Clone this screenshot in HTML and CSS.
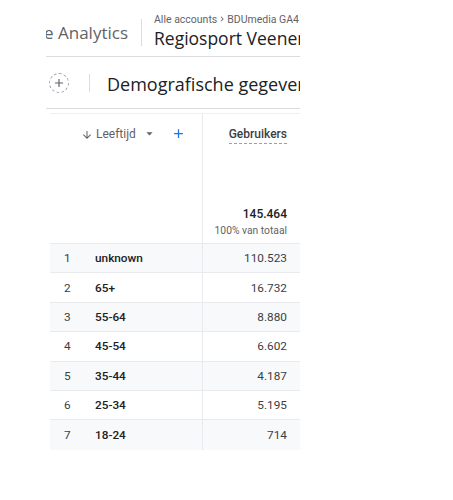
FILE: index.html
```html
<!DOCTYPE html>
<html lang="nl">
<head>
<meta charset="utf-8">
<link rel="stylesheet" href="styles.css">
</head>
<body>
<div class="page">
  <div class="topbar">
    <div class="logo"><span>Google Analytics</span></div>
    <div class="vdiv tall"></div>
    <div class="titles">
      <div class="crumbs">Alle accounts <svg class="chev" viewBox="0 0 24 24" width="10" height="10"><path d="M8.6 16.6L13.2 12 8.6 7.4 10 6l6 6-6 6z" fill="#5f6368"/></svg> BDUmedia GA4</div>
      <div class="property">Regiosport Veenendaal</div>
    </div>
  </div>
  <div class="bar2">
    <div class="addbtn"><svg viewBox="0 0 24 24" width="14" height="14"><path d="M19 13h-6v6h-2v-6H5v-2h6V5h2v6h6v2z" fill="#5f6368"/></svg></div>
    <div class="vdiv short"></div>
    <div class="pagetitle">Demografische gegevens: overzicht</div>
  </div>
  <div class="table">
    <div class="thead">
      <div class="hcell dim">
        <svg class="arrow" viewBox="0 0 24 24" width="12" height="12"><path d="M20 12l-1.41-1.41L13 16.17V4h-2v12.17l-5.58-5.59L4 12l8 8 8-8z" fill="#5f6368"/></svg>
        <span class="dimname">Leeftijd</span>
        <svg class="caret" viewBox="0 0 24 24" width="15" height="15"><path d="M7 10l5 5 5-5z" fill="#5f6368"/></svg>
        <svg class="plus" viewBox="0 0 24 24" width="15" height="15"><path d="M19 13h-6v6h-2v-6H5v-2h6V5h2v6h6v2z" fill="#1a73e8"/></svg>
      </div>
      <div class="hcell metric">
        <span class="metricname">Gebruikers</span>
        <div class="totals">
          <div class="total">145.464</div>
          <div class="pct">100% van totaal</div>
        </div>
      </div>
    </div>
    <div class="row odd"><div class="c1"><span class="idx">1</span><span class="lbl">unknown</span></div><div class="c2">110.523</div></div>
    <div class="row"><div class="c1"><span class="idx">2</span><span class="lbl">65+</span></div><div class="c2">16.732</div></div>
    <div class="row odd"><div class="c1"><span class="idx">3</span><span class="lbl">55-64</span></div><div class="c2">8.880</div></div>
    <div class="row"><div class="c1"><span class="idx">4</span><span class="lbl">45-54</span></div><div class="c2">6.602</div></div>
    <div class="row odd"><div class="c1"><span class="idx">5</span><span class="lbl">35-44</span></div><div class="c2">4.187</div></div>
    <div class="row"><div class="c1"><span class="idx">6</span><span class="lbl">25-34</span></div><div class="c2">5.195</div></div>
    <div class="row odd last"><div class="c1"><span class="idx">7</span><span class="lbl">18-24</span></div><div class="c2">714</div></div>
  </div>
</div>
</body>
</html>
```
FILE: styles.css
```css
* { box-sizing: border-box; }
body {
  margin: 0;
  background: #fff;
  font-family: Roboto, "Liberation Sans", sans-serif;
  color: #202124;
}
.page {
  margin-left: 46px;
  width: 254px;
  overflow: hidden;
}
.topbar {
  height: 57px;
  padding-top: 8px;
  border-bottom: 1px solid #dadce0;
  display: flex;
  align-items: center;
}
.logo {
  width: 82px;
  flex: none;
  overflow: hidden;
  display: flex;
  justify-content: flex-end;
  white-space: nowrap;
  font-family: "Open Sans", Roboto, sans-serif;
  font-size: 17px;
  color: #5f6368;
}
.vdiv {
  width: 1px;
  background: #dadce0;
  flex: none;
}
.vdiv.tall { height: 27px; margin-left: 13px; }
.vdiv.short { height: 18px; margin-left: 20px; }
.titles {
  margin-left: 12px;
  white-space: nowrap;
  display: flex;
  flex-direction: column;
  gap: 0;
  margin-top: -2px;
}
.crumbs {
  font-size: 10.5px;
  color: #5f6368;
  display: flex;
  align-items: center;
}
.property {
  font-family: "Open Sans", Roboto, sans-serif;
  font-size: 17.5px;
  color: #202124;
}
.bar2 {
  height: 52px;
  border-bottom: 1px solid #dadce0;
  display: flex;
  align-items: center;
}
.addbtn {
  width: 20px;
  height: 20px;
  margin-left: 3px;
  border: 1px dashed #9aa0a6;
  border-radius: 50%;
  display: flex;
  align-items: center;
  justify-content: center;
  flex: none;
}
.pagetitle {
  margin-left: 17px;
  margin-top: 3px;
  white-space: nowrap;
  font-family: "Open Sans", Roboto, sans-serif;
  font-size: 18px;
  color: #202124;
}
.table {
  margin-top: 4px;
  margin-left: 4px;
  width: 250px;
  border-top: 1px solid #eef0f2;
}
.thead {
  display: grid;
  grid-template-columns: 153px 97px;
  height: 130px;
  border-bottom: 1px solid #e8eaed;
}
.hcell.dim {
  border-right: 1px solid #e8eaed;
  display: flex;
  padding-top: 13px;
  height: 100%;
  align-items: flex-start;
  font-size: 12px;
  color: #5f6368;
}
.arrow { margin-left: 31px; margin-top: 2px; }
.dimname { margin-left: 3px; }
.caret { margin-left: 6px; margin-top: -1px; }
.plus { margin-left: 14px; margin-top: -1px; }
.hcell.metric {
  display: flex;
  flex-direction: column;
  align-items: flex-end;
  padding: 13px 13px 5px 0;
}
.metricname {
  font-size: 12px;
  font-weight: 500;
  color: #3c4043;
  line-height: 14px;
  padding-bottom: 2px;
  border-bottom: 1px dashed #9aa0a6;
}
.totals {
  margin-top: auto;
  text-align: right;
}
.total {
  font-size: 12px;
  font-weight: 500;
  color: #202124;
  line-height: 16px;
}
.pct {
  font-size: 10.3px;
  color: #5f6368;
  line-height: 14px;
  margin-top: 2px;
}
.row {
  display: grid;
  grid-template-columns: 153px 97px;
  height: 29.4px;
  border-bottom: 1px solid #e8eaed;
  font-size: 11.8px;
}
.row.last { border-bottom: none; }
.row.odd { background: #f8f9fa; }
.c1 {
  border-right: 1px solid #e8eaed;
  display: flex;
  align-items: center;
}
.idx {
  width: 45px;
  padding-left: 14px;
  color: #3c4043;
}
.lbl {
  font-weight: 500;
  color: #202124;
}
.c2 {
  display: flex;
  align-items: center;
  justify-content: flex-end;
  padding-right: 13px;
  color: #3c4043;
}
```
